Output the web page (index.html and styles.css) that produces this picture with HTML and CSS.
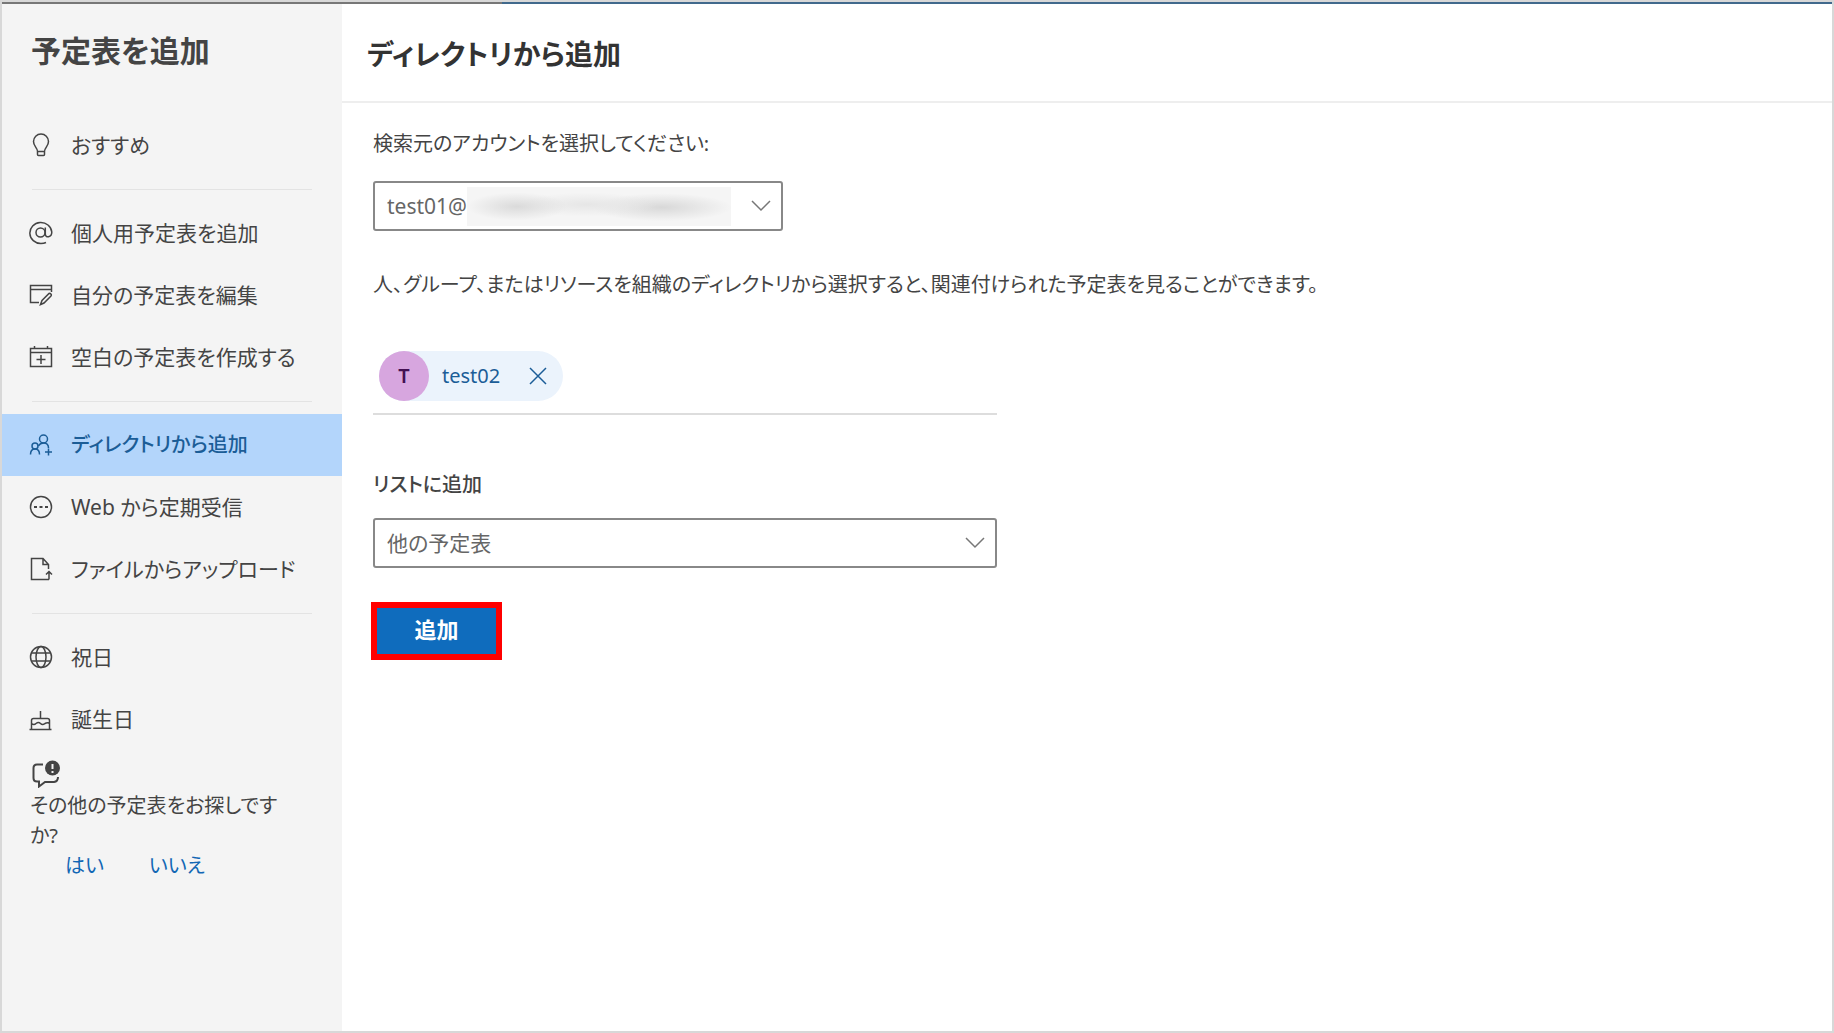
FILE: index.html
```html
<!DOCTYPE html>
<html lang="ja">
<head>
<meta charset="utf-8">
<meta name="viewport" content="width=device-width, initial-scale=1">
<title>予定表を追加</title>
<link rel="stylesheet" href="styles.css">
</head>
<body>
<div class="window">
  <aside class="sidebar">
    <h1 class="sidebar-title">予定表を追加</h1>
    <nav class="menu">
      <a class="menu-item" href="#recommended">
        <svg class="icon" viewBox="0 0 24 24"><path d="M8.500 18.500C8.500 14.500 4.500 13.500 4.500 8.500A7.500 7.500 0 0 1 19.500 8.500C19.500 13.500 15.500 14.500 15.500 18.500V21.500Q15.500 22.500 14.500 22.500H9.500Q8.500 22.500 8.500 21.500ZM8.500 18.500H15.500"/></svg>
        おすすめ</a>
      <hr class="divider">
      <a class="menu-item" href="#personal">
        <svg class="icon" viewBox="0 0 24 24"><circle cx="11.500" cy="11.500" r="4.500"/><path d="M16.300 6.500V13C16.300 17.500 22.800 16.500 22.800 11A11 10.500 0 1 0 12 22.500C14 22.500 15.500 22.200 17 21.500"/></svg>
        個人用予定表を追加</a>
      <a class="menu-item" href="#edit">
        <svg class="icon" viewBox="0 0 24 24"><path d="M10 19.500H1.500V2.500H22.500V9M1.500 6.500H22.500M11.500 21.500L13 17.500L20 10.500Q21.500 10 22.300 11.500Q22.500 12.500 22 13L15 20Z"/></svg>
        自分の予定表を編集</a>
      <a class="menu-item" href="#blank">
        <svg class="icon" viewBox="0 0 24 24"><path d="M1.500 3.500H22.500V21.500H1.500ZM1.500 7.500H22.500M5.500 1V4M18.500 1V4M12 10V19M7.500 14.500H16.500"/></svg>
        空白の予定表を作成する</a>
      <hr class="divider">
      <a class="menu-item is-current" href="#directory" aria-current="page">
        <svg class="icon" viewBox="0 0 24 24"><circle cx="14.500" cy="6" r="4"/><circle cx="6" cy="13" r="3"/><path d="M1.500 21.500C1.500 17.500 3.500 16 6 16S10.500 17.500 10.500 21.500M9.500 13C10.500 11 12 10 14.500 10C17.500 10 19.500 12 19.500 15M19.500 15.500V22.500M16 19H23"/></svg>
        ディレクトリから追加</a>
      <a class="menu-item" href="#web">
        <svg class="icon" viewBox="0 0 24 24"><circle cx="12" cy="12" r="10.500"/><path class="solid" d="M5 11H8V13H5ZM10.500 11H13.500V13H10.500ZM16 11H19V13H16Z"/></svg>
        Web から定期受信</a>
      <a class="menu-item" href="#upload">
        <svg class="icon" viewBox="0 0 24 24"><path d="M20 22.500H2.500V1.500H14L19.500 7.500V12M14 1.500V7.500H19.500M20 22.500V15M17 17.500L20 14.500L23 17.500"/></svg>
        ファイルからアップロード</a>
      <hr class="divider">
      <a class="menu-item" href="#holidays">
        <svg class="icon" viewBox="0 0 24 24"><circle cx="12" cy="12" r="10.500"/><ellipse cx="12" cy="12" rx="5" ry="10.500"/><path d="M2.500 8H21.500M2.500 16H21.500"/></svg>
        祝日</a>
      <a class="menu-item" href="#birthdays">
        <svg class="icon" viewBox="0 0 24 24"><path d="M0.500 22.500H22.500M2.500 22.500V13.500Q2.500 11.500 4.500 11.500H18.500Q20.500 11.500 20.500 13.500V22.500M2.500 16.500Q5 18.500 7 16.500Q9.500 14.500 11.500 16.500Q13.500 18.500 16 16.500Q18.500 15 20.500 16.500M11.500 4V11.500"/></svg>
        誕生日</a>
    </nav>
    <section class="feedback">
      <svg class="feedback-icon" viewBox="0 0 30 28"><path d="M13 4.500H7Q3.500 4.500 3.500 8V18Q3.500 21.500 7 21.500H9V26.500L15 22H24Q28 21.500 28 17"/><circle class="solid" cx="22.500" cy="8" r="7.500"/><path class="mark" d="M22.500 4V9M22.500 11V13"/></svg>
      <p class="feedback-text">その他の予定表をお探しですか?</p>
      <div class="answers"><a href="#yes">はい</a><a href="#no">いいえ</a></div>
    </section>
  </aside>
  <main class="content">
    <header class="content-header"><h2 class="content-title">ディレクトリから追加</h2></header>
    <form class="form">
      <label class="label" for="account">検索元のアカウントを選択してください:</label>
      <div class="select-box account">
        <select id="account"><option>test01@</option></select>
        <span class="redacted"></span>
        <svg class="chevron" viewBox="0 0 20 12"><path d="M1 1L10 10L19 1"/></svg>
      </div>
      <p class="description">人、グループ、またはリソースを組織のディレクトリから選択すると、関連付けられた予定表を見ることができます。</p>
      <div class="people">
        <div class="chip">
          <span class="avatar">T</span>
          <span class="chip-name">test02</span>
          <button class="chip-remove" type="button" aria-label="削除"><svg viewBox="0 0 18 18"><path d="M1 1L17 17M17 1L1 17"/></svg></button>
        </div>
      </div>
      <label class="label label-strong" for="list">リストに追加</label>
      <div class="select-box list">
        <select id="list"><option>他の予定表</option></select>
        <svg class="chevron" viewBox="0 0 20 12"><path d="M1 1L10 10L19 1"/></svg>
      </div>
      <button class="submit" type="button">追加</button>
    </form>
  </main>
</div>
</body>
</html>
```
FILE: styles.css
```css
* {
  box-sizing: border-box;
}

body {
  margin: 0;
  color: #444;
  background: #fff;
  font-family: "Noto Sans", "Noto Sans CJK JP", sans-serif;
  font-size: 20px;
  line-height: 30px;
  font-feature-settings: "palt";
}

h1, h2, p {
  margin: 0;
}

a {
  color: inherit;
  text-decoration: none;
}

svg {
  fill: none;
  stroke: currentColor;
}

svg .solid {
  fill: currentColor;
  stroke: none;
}

.window {
  display: flex;
  min-height: 100vh;
  border: 2px solid #d8d8d8;
  background: linear-gradient(90deg, #777 500px, #41698c 500px) top / 100% 2px no-repeat;
  padding-top: 2px;
}

.sidebar {
  flex: 0 0 340px;
  background: #f4f4f4;
}

.sidebar-title,
.content-title {
  line-height: 40px;
  font-weight: 600;
}

.sidebar-title {
  padding: 27px 29px 43px;
  font-size: 30px;
}

.content-title {
  font-size: 28px;
}

.menu-item {
  display: flex;
  align-items: center;
  gap: 18px;
  height: 62px;
  padding: 0 27px;
  font-size: 21px;
  white-space: nowrap;
}

.menu-item.is-current {
  background: #b3d5fb;
  color: #1b5d97;
  font-size: 20px;
  font-weight: 500;
}

.icon {
  flex: none;
  width: 24px;
  height: 24px;
  stroke-width: 1.500;
}

.divider {
  height: 1px;
  margin: 13px 30px 12px;
  border: 0;
  background: #e3e3e3;
}

.feedback {
  padding: 10px 50px 10px 28px;
}

.feedback-icon {
  display: block;
  width: 30px;
  height: 28px;
  stroke-width: 2;
}

.feedback-icon .mark {
  stroke: #f4f4f4;
}

.feedback-text {
  padding-top: 3px;
}

.answers {
  display: flex;
  gap: 45px;
  padding-left: 35px;
  color: #1267b4;
}

.content {
  flex: 1;
  min-width: 0;
}

.content-header {
  padding: 30px 25px 27px;
  border-bottom: 2px solid #eee;
  color: #333;
}

.form {
  padding: 26px 31px;
}

.label,
.description {
  display: block;
}

.label {
  margin-bottom: 22px;
}

.label-strong {
  margin-bottom: 18px;
  font-weight: 500;
}

.select-box {
  position: relative;
  height: 50px;
}

.select-box select {
  appearance: none;
  width: 100%;
  height: 100%;
  padding: 0 12px;
  border: 2px solid #888;
  border-radius: 3px;
  background: #fff;
  color: #666;
  font: inherit;
  font-size: 21px;
  font-feature-settings: inherit;
}

.account {
  max-width: 410px;
}

.list,
.people {
  max-width: 624px;
}

.redacted {
  position: absolute;
  top: 6px;
  right: 52px;
  bottom: 5px;
  left: 94px;
  background:
    radial-gradient(50px 14px at 50px 50%, #dadada, transparent),
    radial-gradient(70px 12px at 120px 45%, #e6e6e6, transparent),
    radial-gradient(70px 14px at 195px 52%, #d8d8d8, transparent),
    #f5f5f5;
}

.chevron {
  position: absolute;
  top: 19px;
  right: 12px;
  width: 20px;
  height: 12px;
  color: #777;
  stroke-width: 1.500;
  pointer-events: none;
}

.description {
  margin: 39px 0 51px;
}

.people {
  padding: 0 6px 12px;
  border-bottom: 2px solid #ddd;
  margin-bottom: 55px;
}

.chip {
  display: flex;
  align-items: center;
  width: fit-content;
  height: 50px;
  border-radius: 25px;
  background: #ebf3fc;
  color: #1b5d97;
}

.avatar {
  width: 50px;
  height: 50px;
  border-radius: 50%;
  background: #d7a6df;
  color: #431052;
  line-height: 50px;
  font-weight: 600;
  text-align: center;
}

.chip-name {
  padding: 0 19px 0 13px;
}

.chip-remove {
  display: flex;
  align-items: center;
  width: 44px;
  height: 50px;
  padding: 0 10px;
  border: 0;
  background: none;
  color: inherit;
}

.chip-remove svg {
  width: 18px;
  height: 18px;
  stroke-width: 1.500;
}

.submit {
  display: block;
  width: 131px;
  height: 58px;
  margin: 34px -2px 0;
  padding: 0 0 4px;
  border: 6px solid #f00;
  background: #0f6cbd;
  color: #fff;
  font: inherit;
  font-size: 22px;
  font-feature-settings: inherit;
  font-weight: 600;
}
```
